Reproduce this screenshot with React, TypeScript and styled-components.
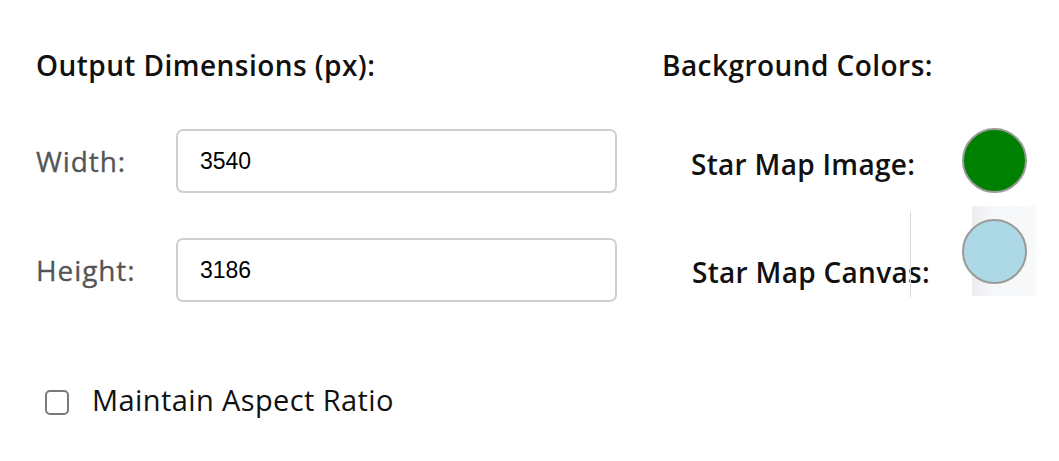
import React from "react";
import styled, { createGlobalStyle } from "styled-components";

const Global = createGlobalStyle`
  html, body { margin: 0; padding: 0; background: #ffffff; }
  body { font-family: "Open Sans", "Noto Sans", sans-serif; }
`;

const Page = styled.div`
  display: flex;
  width: 1059px;
  height: 461px;
  box-sizing: border-box;
  padding: 47px 0 0 36px;
  overflow: hidden;
`;

const LeftColumn = styled.section`
  display: flex;
  flex-direction: column;
  width: 581px;
`;

const RightColumn = styled.section`
  display: flex;
  flex-direction: column;
  margin-left: 45px;
  width: 397px;
`;

const Title = styled.h2`
  margin: 0;
  font-size: 28px;
  line-height: 36px;
  font-weight: 600;
  letter-spacing: 0.45px;
  color: #111;
`;

const FieldGrid = styled.div`
  display: grid;
  grid-template-columns: 140px 441px;
  row-gap: 45px;
  margin-top: 46px;
  align-items: center;
`;

const FieldLabel = styled.label`
  font-size: 28px;
  line-height: 36px;
  font-weight: 500;
  letter-spacing: 0.9px;
  color: #555;
  -webkit-text-stroke: 0.3px #555;
`;

const NumberInput = styled.input`
  box-sizing: border-box;
  height: 64px;
  width: 441px;
  border: 2px solid #cfcfcf;
  border-radius: 7px;
  padding: 0 0 0 22px;
  font-family: "Liberation Sans", Arial, sans-serif;
  font-size: 23px;
  color: #000;
  background: #fff;
  outline: none;
`;

const CheckRow = styled.label`
  display: flex;
  align-items: center;
  gap: 23px;
  margin-top: 80px;
  margin-left: 9px;
  font-size: 29px;
  line-height: 36px;
  letter-spacing: 0.4px;
  color: #111;
`;

const CheckBox = styled.span`
  box-sizing: border-box;
  width: 24px;
  height: 25px;
  margin-top: 4px;
  border: 2px solid #7a7a7a;
  border-radius: 5px;
  background: #fff;
`;

const SwatchList = styled.div`
  display: flex;
  flex-direction: column;
  margin-top: 45px;
  margin-left: 29px;
  gap: 14px;
`;

const SwatchRow = styled.div<{ $tall?: boolean }>`
  position: relative;
  display: grid;
  grid-template-columns: 271px 66px;
  height: ${(p) => (p.$tall ? "90px" : "65px")};
  align-items: ${(p) => (p.$tall ? "end" : "center")};
`;

const SwatchLabel = styled.span<{ $low?: boolean }>`
  display: block;
  white-space: nowrap;
  font-size: 28px;
  line-height: 36px;
  font-weight: 600;
  letter-spacing: 0.3px;
  color: #111;
  padding-top: ${(p) => (p.$low ? "0" : "5px")};
  padding-bottom: ${(p) => (p.$low ? "7px" : "0")};
  margin-left: ${(p) => (p.$low ? "1px" : "0")};
`;

const Divider = styled.span`
  position: absolute;
  left: 219px;
  top: 5px;
  width: 1px;
  height: 85px;
  background: #d8d8d8;
`;

const SwatchHolder = styled.div<{ $panel?: boolean }>`
  position: relative;
  align-self: center;
  width: 66px;
  height: 66px;
  &::before {
    content: "";
    display: ${(p) => (p.$panel ? "block" : "none")};
    position: absolute;
    left: 10px;
    top: -13px;
    width: 64px;
    height: 90px;
    background: linear-gradient(90deg, #ececee 0%, #f6f7f9 30%, #f8f9fb 100%);
  }
`;

const Swatch = styled.span<{ $color: string }>`
  position: relative;
  display: block;
  box-sizing: border-box;
  width: 65px;
  height: 65px;
  border-radius: 50%;
  border: 2px solid #9a9a9a;
  background: ${(p) => p.$color};
`;

export default function App() {
  return (
    <>
      <Global />
      <Page>
        <LeftColumn>
          <Title>Output Dimensions (px):</Title>
          <FieldGrid>
            <FieldLabel htmlFor="w">Width:</FieldLabel>
            <NumberInput id="w" defaultValue="3540" />
            <FieldLabel htmlFor="h">Height:</FieldLabel>
            <NumberInput id="h" defaultValue="3186" />
          </FieldGrid>
          <CheckRow>
            <CheckBox />
            Maintain Aspect Ratio
          </CheckRow>
        </LeftColumn>
        <RightColumn>
          <Title>Background Colors:</Title>
          <SwatchList>
            <SwatchRow>
              <SwatchLabel>Star Map Image:</SwatchLabel>
              <SwatchHolder>
                <Swatch $color="#008000" />
              </SwatchHolder>
            </SwatchRow>
            <SwatchRow $tall>
              <SwatchLabel $low>Star Map Canvas:</SwatchLabel>
              <SwatchHolder $panel>
                <Swatch $color="#add8e6" />
              </SwatchHolder>
              <Divider />
            </SwatchRow>
          </SwatchList>
        </RightColumn>
      </Page>
    </>
  );
}
